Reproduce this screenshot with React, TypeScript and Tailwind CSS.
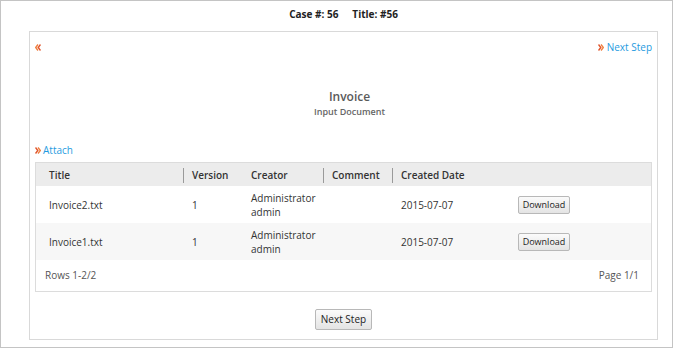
import React from 'react';

const rows = [
  { title: 'Invoice2.txt', version: '1', creator: 'Administrator', user: 'admin', date: '2015-07-07' },
  { title: 'Invoice1.txt', version: '1', creator: 'Administrator', user: 'admin', date: '2015-07-07' },
];

const cols = 'grid grid-cols-[147px_59px_81px_69px_117px_1fr]';

function Arrow({ left = false }: { left?: boolean }) {
  return (
    <svg width="6" height="7" viewBox="0 0 6 7" className={left ? 'rotate-180' : ''}>
      <path d="M0.5 0.5 L2.8 3.5 L0.5 6.5" fill="none" stroke="#e0552c" strokeWidth="1.4" />
      <path d="M3 0.5 L5.3 3.5 L3 6.5" fill="none" stroke="#f08040" strokeWidth="1.4" />
    </svg>
  );
}

function Sep() {
  return <span className="h-[15px] w-px bg-[#9a9a9a] mr-2" />;
}

function Btn({ children, className = '' }: { children: React.ReactNode; className?: string }) {
  return (
    <button
      className={
        'border border-[#b8b8b8] rounded-[2px] bg-gradient-to-b from-[#fbfbfb] to-[#e4e4e4] text-[#222] flex items-center justify-center ' +
        className
      }
    >
      {children}
    </button>
  );
}

export default function App() {
  return (
    <div className="w-[673px] h-[348px] border border-[#c4c4c4] bg-white font-['Open_Sans',sans-serif]">
      <div className="h-[30px] flex items-center justify-center gap-[14px] text-[10px] font-bold text-[#222] pl-[14px] pb-[3px]">
        <span>Case #: 56</span>
        <span>Title: #56</span>
      </div>

      <div className="ml-[28px] w-[629px] h-[309px] border border-[#d9d9d9] px-[5px] flex flex-col">
        <div className="mt-[8px] h-[14px] flex items-center justify-between">
          <Arrow left />
          <div className="flex items-center gap-[3px]">
            <Arrow />
            <span className="text-[10px] text-[#1f9be0]">Next Step</span>
          </div>
        </div>

        <div className="mt-[35px] flex flex-col items-center pl-[12px]">
          <span className="text-[12px] leading-[16px] font-semibold text-[#5a5a5a]">Invoice</span>
          <span className="text-[9px] leading-[13px] font-semibold text-[#666]">Input Document</span>
        </div>

        <div className="mt-[25px] h-[14px] flex items-center gap-[2px]">
          <Arrow />
          <span className="text-[10px] text-[#1f9be0]">Attach</span>
        </div>

        <div className="mt-[5px] border border-[#dcdcdc] text-[10px] text-[#333]">
          <div className={cols + ' h-[23px] bg-[#ececec] font-semibold pt-[1px]'}>
            <div className="flex items-center pl-[13px]">Title</div>
            <div className="flex items-center"><Sep />Version</div>
            <div className="flex items-center pl-[9px]">Creator</div>
            <div className="flex items-center"><Sep />Comment</div>
            <div className="flex items-center"><Sep />Created Date</div>
            <div />
          </div>
          {rows.map((r, i) => (
            <div key={r.title} className={cols + ' h-[37px] pt-[1px] ' + (i % 2 ? 'bg-[#f7f7f7]' : 'bg-white')}>
              <div className="flex items-center pl-[13px]">{r.title}</div>
              <div className="flex items-center pl-[9px]">{r.version}</div>
              <div className="flex flex-col justify-center pl-[9px] leading-[14px]">
                <span>{r.creator}</span>
                <span>{r.user}</span>
              </div>
              <div className="flex items-center pl-[9px]" />
              <div className="flex items-center pl-[9px]">{r.date}</div>
              <div className="flex items-center pl-[9px]">
                <Btn className="w-[52px] h-[18px] text-[9px]">Download</Btn>
              </div>
            </div>
          ))}
          <div className="h-[31px] flex items-center justify-between pl-[9px] pr-[12px] text-[#555]">
            <span>Rows 1-2/2</span>
            <span>Page 1/1</span>
          </div>
        </div>

        <div className="mt-[17px] flex justify-center">
          <Btn className="w-[57px] h-[21px] text-[10px]">Next Step</Btn>
        </div>
      </div>
    </div>
  );
}
